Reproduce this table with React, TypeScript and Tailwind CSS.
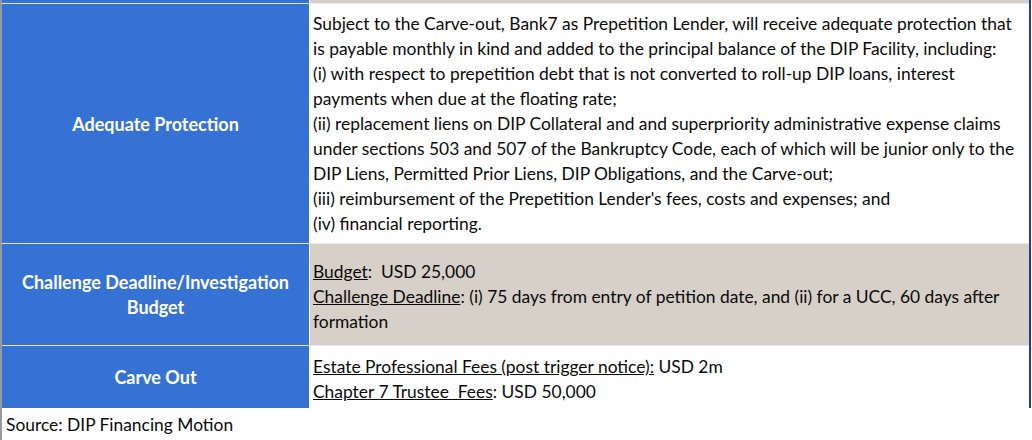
const BLUE = "bg-[#3572d3]";

function Label({ lines }: { lines: string[] }) {
  return (
    <div className={`${BLUE} flex flex-col items-center justify-center text-center font-bold text-white text-[18px] leading-[25px] pt-[1px]`}>
      {lines.map((l) => (
        <div key={l} className="whitespace-nowrap">{l}</div>
      ))}
    </div>
  );
}

const PROTECTION = [
  "Subject to the Carve-out, Bank7 as Prepetition Lender, will receive adequate protection that",
  "is payable monthly in kind and added to the principal balance of the DIP Facility, including:",
  "(i) with respect to prepetition debt that is not converted to roll-up DIP loans, interest",
  "payments when due at the floating rate;",
  "(ii) replacement liens on DIP Collateral and and superpriority administrative expense claims",
  "under sections 503 and 507 of the Bankruptcy Code, each of which will be junior only to the",
  "DIP Liens, Permitted Prior Liens, DIP Obligations, and the Carve-out;",
  "(iii) reimbursement of the Prepetition Lender's fees, costs and expenses; and",
  "(iv) financial reporting.",
];

export default function App() {
  return (
    <div className="w-[1032px] h-[440px] bg-white font-['Lato','Liberation_Sans',sans-serif] text-[#0a0a0a]">
      <div className="w-[1031px] border-l-2 border-l-[#9a9a9a] border-r-2 border-r-[#1d3f91] flex flex-col gap-px bg-[#e4e9f2]">
        <div className="h-[3px] grid grid-cols-[307px_1fr] gap-px bg-white">
          <div className={BLUE} />
          <div className="bg-[#d6d0c8]" />
        </div>

        <div className="h-[239px] grid grid-cols-[307px_1fr] gap-px bg-white">
          <Label lines={["Adequate Protection"]} />
          <div className="bg-white pl-[3px] pt-[7px] text-[17.4px] leading-[25px]">
            {PROTECTION.map((l) => (
              <div key={l} className="whitespace-nowrap">{l}</div>
            ))}
          </div>
        </div>

        <div className="h-[101px] grid grid-cols-[307px_1fr] gap-px bg-white">
          <Label lines={["Challenge Deadline/Investigation", "Budget"]} />
          <div className="bg-[#d6d0c8] pl-[3px] pt-[3px] flex flex-col justify-center text-[17.4px] leading-[25px]">
            <div className="whitespace-pre">
              <span className="underline">Budget</span>:  USD 25,000
            </div>
            <div className="whitespace-nowrap">
              <span className="underline">Challenge Deadline</span>: (i) 75 days from entry of petition date, and (ii) for a UCC, 60 days after
            </div>
            <div>formation</div>
          </div>
        </div>

        <div className="h-[62px] grid grid-cols-[307px_1fr] gap-px bg-white">
          <Label lines={["Carve Out"]} />
          <div className="bg-white pl-[3px] pt-[8px] text-[17.4px] leading-[25px]">
            <div className="whitespace-nowrap">
              <span className="underline">Estate Professional Fees (post trigger notice):</span> USD 2m
            </div>
            <div className="whitespace-pre">
              <span className="underline">Chapter 7 Trustee  Fees</span>: USD 50,000
            </div>
          </div>
        </div>
      </div>
      <div className="pl-[4px] pt-[4px] text-[17.4px] leading-[25px] border-l-2 border-l-[#9a9a9a] h-[32px]">
        Source: DIP Financing Motion
      </div>
    </div>
  );
}
